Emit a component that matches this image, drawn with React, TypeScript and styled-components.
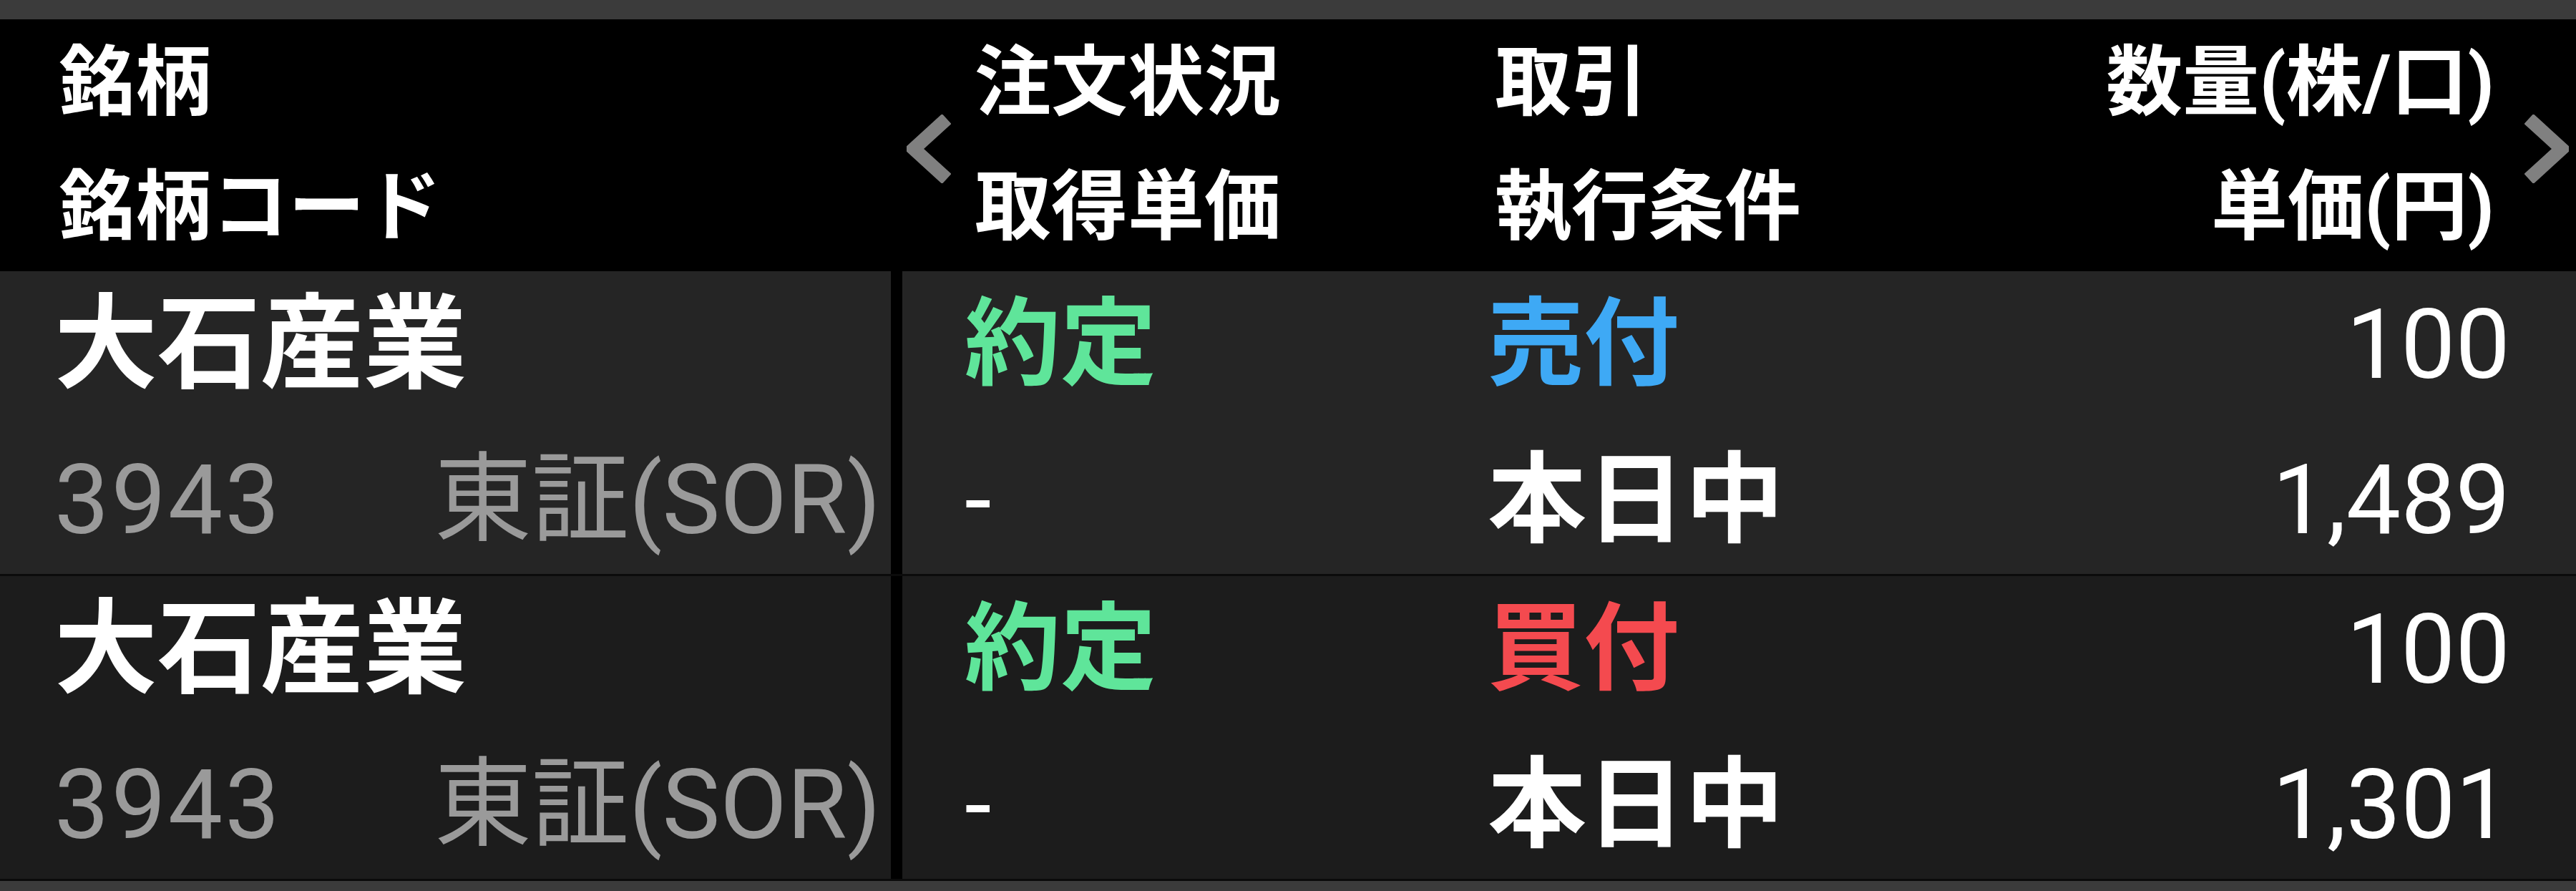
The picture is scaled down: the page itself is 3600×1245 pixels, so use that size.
import React from "react";
import styled, { createGlobalStyle } from "styled-components";

const GlobalStyle = createGlobalStyle`
  html, body {
    margin: 0;
    padding: 0;
    background: #3b3b3b;
  }
  body {
    font-family: Roboto, "Noto Sans CJK JP", sans-serif;
    color: #ffffff;
  }
`;

const Screen = styled.div`
  width: 3600px;
  min-height: 1245px;
  padding-top: 27px;
  background: #3b3b3b;
  box-sizing: border-box;
`;

const Header = styled.div`
  display: grid;
  grid-template-columns: 1261px 101px 727px 600px 1fr 114px;
  height: 352px;
  background: #000;
  align-items: center;
`;

const HeadCol = styled.div<{ $align?: "left" | "right"; $pad?: number }>`
  display: flex;
  flex-direction: column;
  align-items: ${(p) => (p.$align === "right" ? "flex-end" : "flex-start")};
  padding-left: ${(p) => p.$pad ?? 0}px;
  font-size: 107px;
  font-weight: 700;
  line-height: 174px;
  white-space: nowrap;
`;

const ChevronCell = styled.div<{ $offset: number }>`
  display: flex;
  align-items: center;
  padding-left: ${(p) => p.$offset}px;
  padding-top: 10px;
`;

const Table = styled.div`
  display: flex;
  flex-direction: column;
  gap: 3px;
  background: #0b0b0b;
  padding-bottom: 3px;
`;

const Row = styled.div`
  display: grid;
  grid-template-columns: 1245px 1fr;
  column-gap: 16px;
  background: #000;
  height: 423px;
`;

const Cell = styled.div<{ $bg: string }>`
  background: ${(p) => p.$bg};
`;

const NameCell = styled(Cell)`
  display: flex;
  flex-direction: column;
  gap: 11px;
  padding: 0 14px 0 76px;
`;

const Name = styled.div`
  font-size: 144px;
  font-weight: 700;
  line-height: 206px;
  white-space: nowrap;
`;

const CodeLine = styled.div`
  display: flex;
  justify-content: space-between;
  font-size: 136px;
  font-weight: 400;
  line-height: 206px;
  color: #9a9a9a;
  white-space: nowrap;
`;

const Code = styled.span`
  letter-spacing: 3px;
`;

const OrderCell = styled(Cell)`
  display: grid;
  grid-template-columns: 731px 1fr auto;
  grid-template-rows: 206px 206px;
  row-gap: 11px;
  padding: 0 92px 0 87px;
`;

const Value = styled.div<{ $color?: string; $bold?: boolean; $right?: boolean; $size?: number }>`
  font-size: ${(p) => p.$size ?? 134}px;
  font-weight: ${(p) => (p.$bold ? 700 : 400)};
  color: ${(p) => p.$color ?? "#ffffff"};
  line-height: 206px;
  text-align: ${(p) => (p.$right ? "right" : "left")};
  white-space: nowrap;
`;

const Chevron = ({ dir }: { dir: "left" | "right" }) => (
  <svg width="62" height="96" viewBox="0 0 62 96">
    <polyline
      points={dir === "left" ? "56,6 10,48 56,90" : "6,6 52,48 6,90"}
      fill="none"
      stroke="#808080"
      strokeWidth="19"
      strokeLinejoin="miter"
    />
  </svg>
);

type Order = {
  name: string;
  code: string;
  market: string;
  status: string;
  acquire: string;
  side: string;
  sideColor: string;
  cond: string;
  qty: string;
  price: string;
  bg: string;
};

const orders: Order[] = [
  {
    name: "大石産業",
    code: "3943",
    market: "東証(SOR)",
    status: "約定",
    acquire: "-",
    side: "売付",
    sideColor: "#3ea9f5",
    cond: "本日中",
    qty: "100",
    price: "1,489",
    bg: "#252525",
  },
  {
    name: "大石産業",
    code: "3943",
    market: "東証(SOR)",
    status: "約定",
    acquire: "-",
    side: "買付",
    sideColor: "#f44a4f",
    cond: "本日中",
    qty: "100",
    price: "1,301",
    bg: "#1c1c1c",
  },
];

export default function App() {
  return (
    <>
      <GlobalStyle />
      <Screen>
        <Header>
          <HeadCol $pad={82}>
            <span>銘柄</span>
            <span>銘柄コード</span>
          </HeadCol>
          <ChevronCell $offset={6}>
            <Chevron dir="left" />
          </ChevronCell>
          <HeadCol>
            <span>注文状況</span>
            <span>取得単価</span>
          </HeadCol>
          <HeadCol>
            <span>取引</span>
            <span>執行条件</span>
          </HeadCol>
          <HeadCol $align="right">
            <span>数量(株/口)</span>
            <span>単価(円)</span>
          </HeadCol>
          <ChevronCell $offset={42}>
            <Chevron dir="right" />
          </ChevronCell>
        </Header>
        <Table>
          {orders.map((o, i) => (
            <Row key={i}>
              <NameCell $bg={o.bg}>
                <Name>{o.name}</Name>
                <CodeLine>
                  <Code>{o.code}</Code>
                  <span>{o.market}</span>
                </CodeLine>
              </NameCell>
              <OrderCell $bg={o.bg}>
                <Value $bold $color="#5fe59a">{o.status}</Value>
                <Value $bold $color={o.sideColor}>{o.side}</Value>
                <Value $right $size={136}>{o.qty}</Value>
                <Value $size={136}>{o.acquire}</Value>
                <Value $bold $size={138}>{o.cond}</Value>
                <Value $right $size={136}>{o.price}</Value>
              </OrderCell>
            </Row>
          ))}
        </Table>
      </Screen>
    </>
  );
}
